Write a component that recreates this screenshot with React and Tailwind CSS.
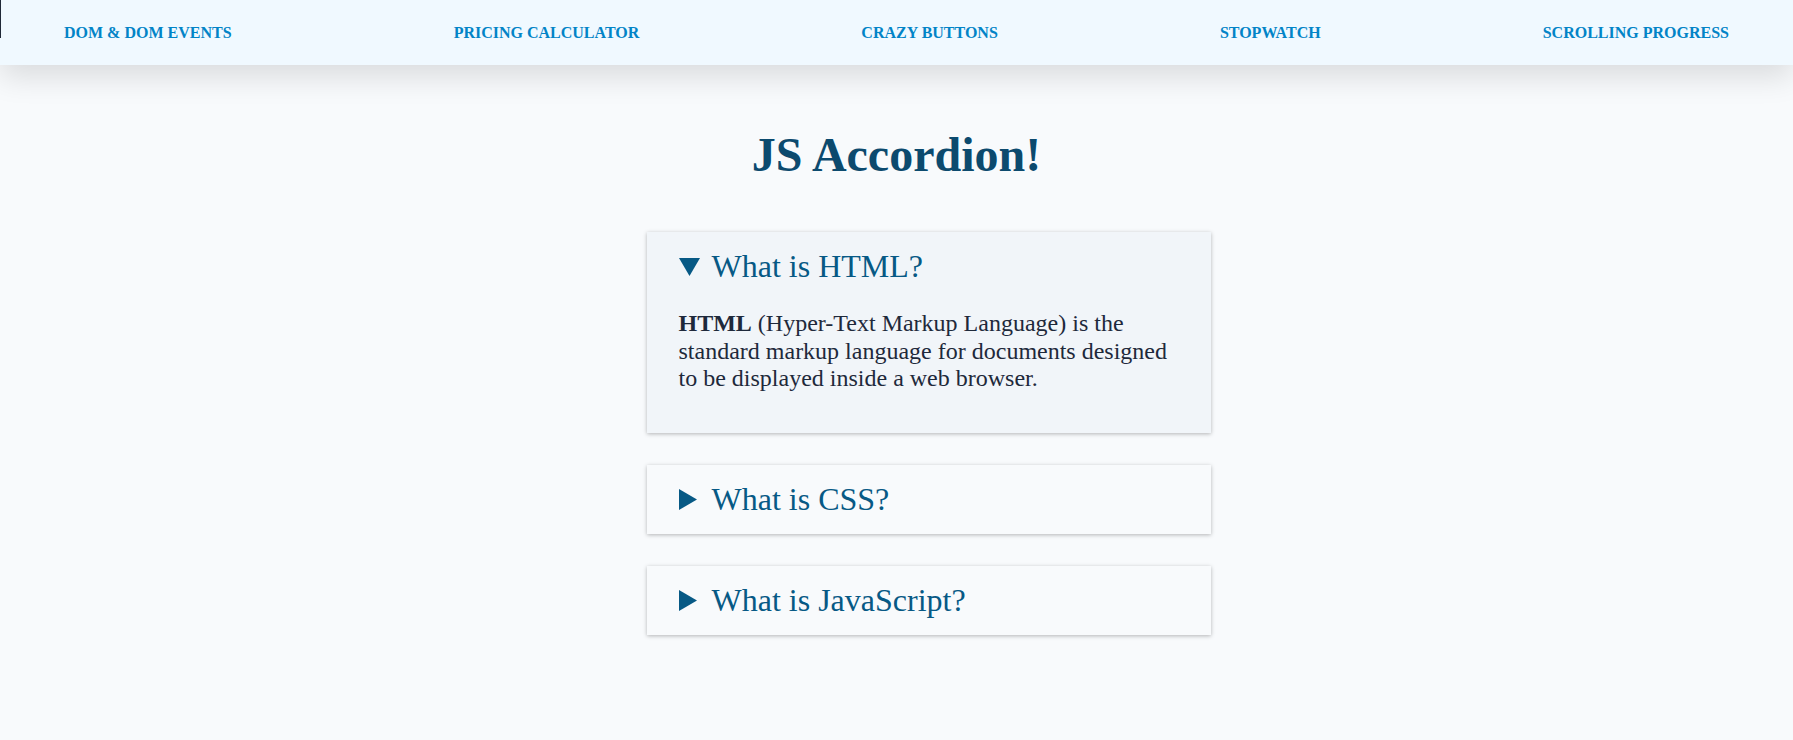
import React, { useState } from 'react';

const links = ['DOM & DOM Events', 'Pricing Calculator', 'Crazy Buttons', 'Stopwatch', 'Scrolling Progress'];

const items = [
  {
    q: 'What is HTML?',
    a: (
      <>
        <strong>HTML</strong> (Hyper-Text Markup Language) is the standard markup language for documents designed
        to be displayed inside a web browser.
      </>
    ),
  },
  { q: 'What is CSS?', a: 'CSS (Cascading Style Sheets) is a style sheet language used for describing the presentation of a document.' },
  { q: 'What is JavaScript?', a: 'JavaScript is a programming language that is one of the core technologies of the World Wide Web.' },
];

function Marker({ open }) {
  return (
    <span className="w-[33px] shrink-0 flex items-center">
      {open ? (
        <svg width="21" height="18" viewBox="0 0 21 18">
          <path d="M0 0 L21 0 L10.5 18 Z" fill="#075985" />
        </svg>
      ) : (
        <svg width="18" height="21" viewBox="0 0 18 21">
          <path d="M0 0 L18 10.5 L0 21 Z" fill="#075985" />
        </svg>
      )}
    </span>
  );
}

export default function App() {
  const [open, setOpen] = useState(0);

  return (
    <div className="min-h-screen bg-[#f8fafc] font-['Liberation_Serif',_'Times_New_Roman',_serif]">
      <div className="absolute left-0 top-0 w-px h-[38px] bg-[#1f2937] z-20" />
      <nav className="relative z-10 h-[65px] bg-[#f0f9ff] flex items-center justify-between px-16 shadow-[0_12px_30px_rgba(0,0,0,0.12)]">
        {links.map((l) => (
          <a key={l} href="#" className="text-base font-bold uppercase text-[#0284c7]">
            {l}
          </a>
        ))}
      </nav>

      <main className="flex flex-col items-center">
        <h1 className="mt-[63px] text-[48px] leading-[53px] font-bold text-[#0c4a6e]">JS Accordion!</h1>

        <div className="mt-[51px] ml-16 w-[564px] flex flex-col gap-8">
          {items.map((it, i) => {
            const isOpen = open === i;
            return (
              <div
                key={it.q}
                className={`${isOpen ? 'bg-[#f1f5f9]' : 'bg-[#f8fafc]'} shadow-[0_1px_4px_rgba(0,0,0,0.28)]`}
              >
                <button
                  onClick={() => setOpen(isOpen ? -1 : i)}
                  className="w-full flex items-center px-8 py-4 text-left cursor-pointer"
                >
                  <Marker open={isOpen} />
                  <span className="text-[32px] leading-[37px] text-[#075985]">{it.q}</span>
                </button>
                {isOpen && (
                  <p className="px-8 pt-[9px] pb-10 text-[24px] leading-[27.5px] text-[#1e293b]">{it.a}</p>
                )}
              </div>
            );
          })}
        </div>
      </main>
    </div>
  );
}
